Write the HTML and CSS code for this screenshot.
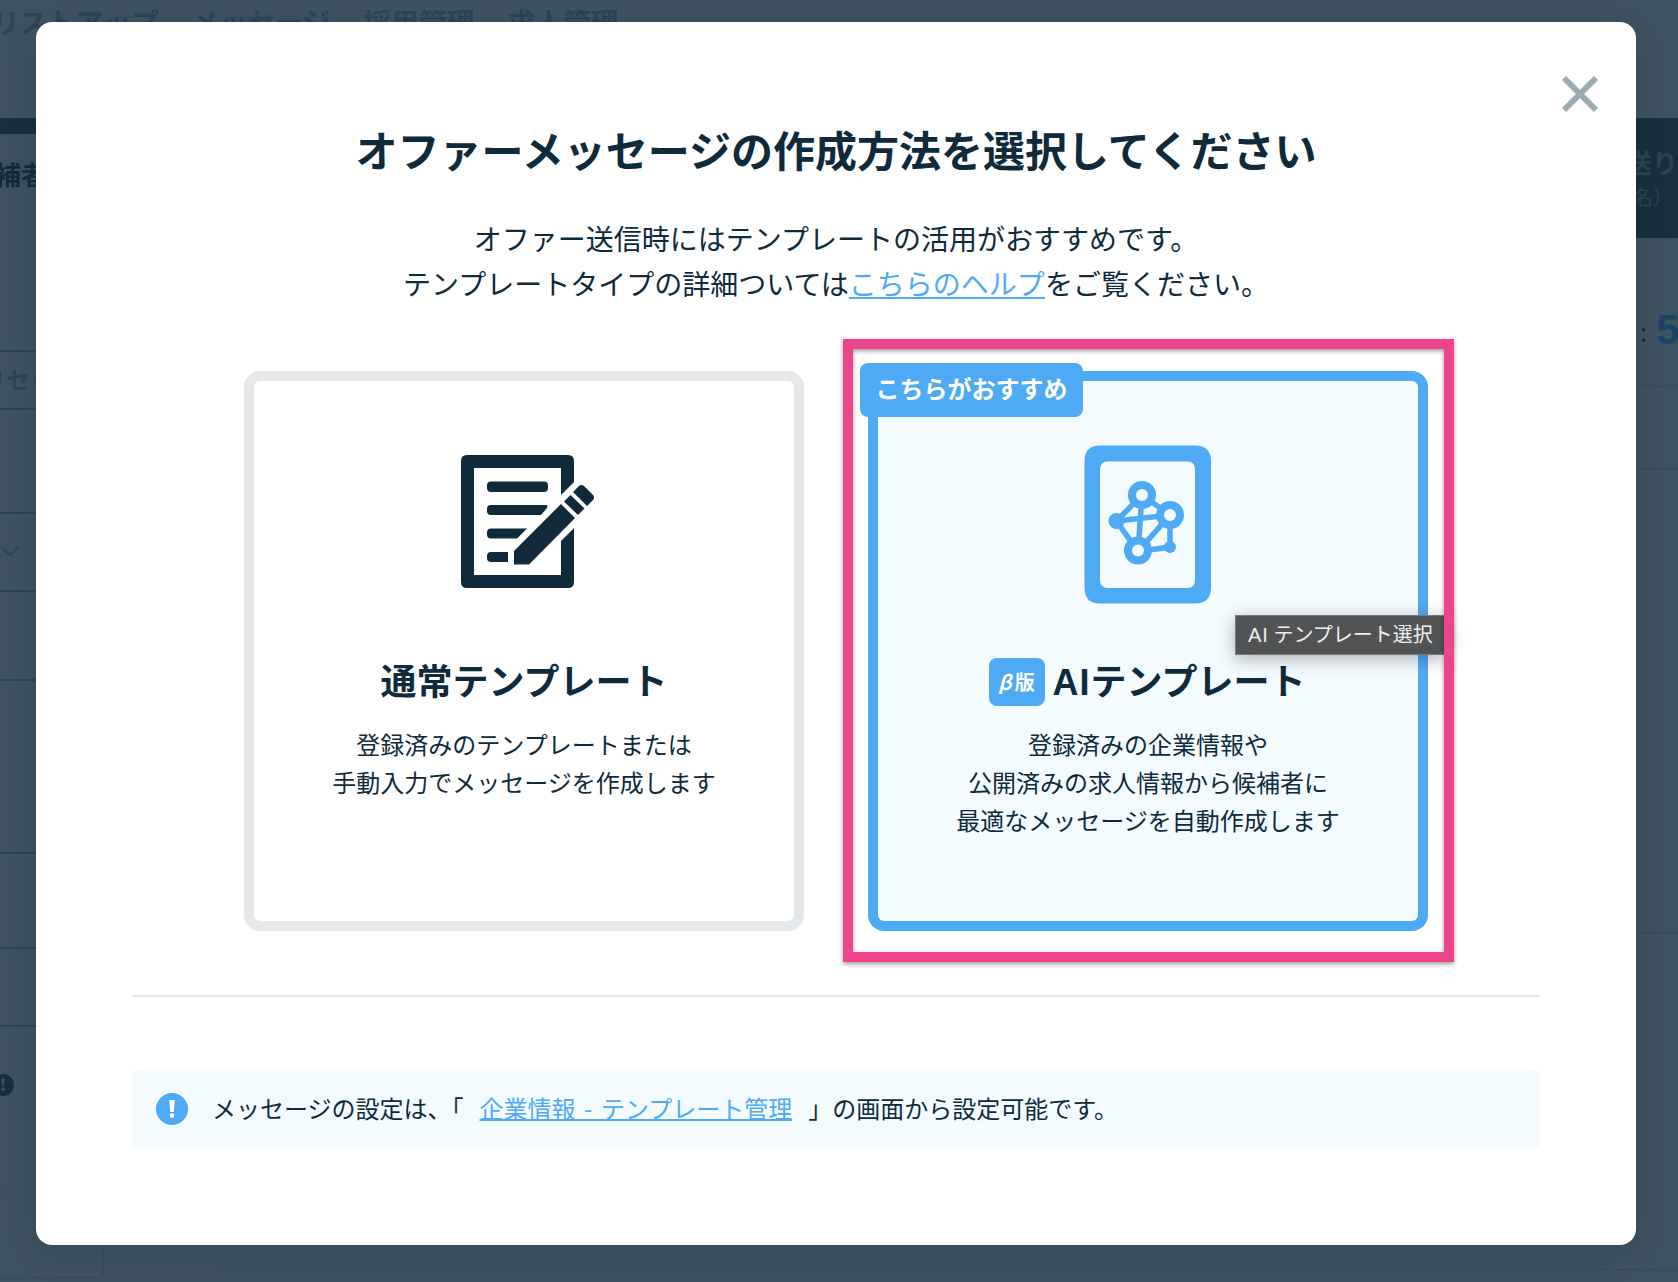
FILE: index.html
```html
<!DOCTYPE html>
<html lang="ja">
<head>
<meta charset="utf-8">
<title>オファーメッセージの作成方法</title>
<link rel="stylesheet" href="styles.css">
</head>
<body>
<div class="page">
  <nav class="nav"><span>リストアップ</span><span>メッセージ</span><span>採用管理</span><span>求人管理</span></nav>
  <div class="columns">
    <aside class="side">
      <div class="side-head">補者</div>
      <div class="row reset">リセット</div>
      <div class="row r1"></div>
      <div class="row r2"><svg width="18" height="10" viewBox="0 0 18 10"><path d="M1 1l8 7 8-7" fill="none" stroke="#2c4454" stroke-width="2"/></svg></div>
      <div class="row r3"></div>
      <div class="row r4"></div>
      <div class="row r5"></div>
      <div class="row r6"></div>
      <div class="row r7"><span class="dot">!</span></div>
      <div class="row r8"></div>
    </aside>
    <div class="list"></div>
    <div class="results">
      <div class="send"><b>送り</b><small>名）</small></div>
      <div class="count"><span>:</span><b>5</b></div>
      <div class="line l1"></div>
      <div class="line l2"></div>
      <div class="line l3"></div>
      <div class="line"></div>
    </div>
  </div>
</div>

<div class="modal">
  <button class="close" aria-label="閉じる"><svg width="40" height="40" viewBox="0 0 40 40"><path d="M4 4l32 32M36 4L4 36" stroke="#9aabb1" stroke-width="6"/></svg></button>
  <h1 class="title">オファーメッセージの作成方法を選択してください</h1>
  <p class="lead">オファー送信時にはテンプレートの活用がおすすめです。<br>テンプレートタイプの詳細ついては<a href="#">こちらのヘルプ</a>をご覧ください。</p>
  <div class="cards">
    <section class="card">
      <div class="art">
        <svg width="144" height="136" viewBox="-8 0 144 136">
          <g fill="#0e2a3b">
            <path fill-rule="evenodd" d="M7 1H108Q114 1 114 7V28L101 41V14H14V121H101V87L114 74V128Q114 134 108 134H7Q1 134 1 128V7Q1 1 7 1Z"/>
            <rect x="27" y="27.500" width="61" height="10.500" rx="4"/>
            <path d="M31 51H86Q88 51 87 54L81 61H31Q27 61 27 57V55Q27 51 31 51Z"/>
            <path d="M31 74.500H67L57 84.500H31Q27 84.500 27 80.500V78.500Q27 74.500 31 74.500Z"/>
            <path d="M31 98H48V108H31Q27 108 27 104V102Q27 98 31 98Z"/>
            <path d="M54 97L101 50L115 64L69 110.500H54Z"/>
            <path d="M104 47.500L110.500 41L124.500 54.500L118 61Z"/>
            <path d="M113 38L119 32Q121.500 30 124 32L133 41Q135 43.500 133 46L127 52Z"/>
          </g>
        </svg>
      </div>
      <h2 class="name">通常テンプレート</h2>
      <p class="desc">登録済みのテンプレートまたは<br>手動入力でメッセージを作成します</p>
    </section>
    <section class="card recommended">
      <span class="ribbon">こちらがおすすめ</span>
      <div class="art">
        <svg width="129" height="159" viewBox="0 0 129 159">
          <path fill="#4faaf5" fill-rule="evenodd" d="M16 .5H111Q127 .5 127 16.500V142.500Q127 158.500 111 158.500H16Q.5 158.500 .5 142.500V16.500Q.5 .5 16 .5ZM24 16.500Q16 16.500 16 24.500V135Q16 143 24 143H103Q111 143 111 135V24.500Q111 16.500 103 16.500Z"/>
          <g transform="translate(.5 .5)">
            <path d="M57.500 49.500L32 75.500L53.500 106L57.500 49.500L85.500 69.500V101.500L53.500 106L85.500 69.500L32 75.500" fill="none" stroke="#4faaf5" stroke-width="5.500"/>
            <g fill="#4faaf5"><circle cx="32" cy="75.500" r="8"/><circle cx="85.500" cy="101.500" r="6"/></g>
            <g fill="#f3fbff" stroke="#4faaf5" stroke-width="8"><circle cx="57.500" cy="49.500" r="10"/><circle cx="85.500" cy="69.500" r="10"/><circle cx="53.500" cy="105" r="10"/></g>
          </g>
        </svg>
      </div>
      <h2 class="name"><span class="beta"><i>β</i>版</span><span><span class="latin">AI</span>テンプレート</span></h2>
      <p class="desc">登録済みの企業情報や<br>公開済みの求人情報から候補者に<br>最適なメッセージを自動作成します</p>
    </section>
  </div>
  <div class="note">
    <svg width="32" height="32" viewBox="0 0 32 32"><circle cx="16" cy="16" r="16" fill="#4faaf5"/><path d="M13.200 7h5.600l-1 12h-3.600z" fill="#fff"/><circle cx="16" cy="22.600" r="2.300" fill="#fff"/></svg>
    <p>メッセージの設定は、「<a href="#">企業情報 - テンプレート管理</a>」の画面から設定可能です。</p>
  </div>
</div>
<div class="tooltip"><span class="latin">AI</span> テンプレート選択</div>
<div class="highlight"></div>
</body>
</html>
```
FILE: styles.css
```css
* { box-sizing: border-box; }
body {
  margin: 0;
  width: 1678px;
  height: 1282px;
  overflow: hidden;
  position: relative;
  background: #3e5360;
  color: #0e2a3b;
  font-family: "Noto Sans CJK JP", sans-serif;
}
h1, h2, p { margin: 0; }
a { color: #4faaf5; text-decoration: underline; text-decoration-thickness: 2px; text-decoration-skip-ink: none; }
.latin { font-family: "Liberation Sans", sans-serif; letter-spacing: 1px; }

/* Dimmed page under the dialog */
.page { height: 1282px; overflow: hidden; }
.nav {
  display: flex;
  gap: 33px;
  height: 118px;
  margin-left: -8px;
  font-size: 27.8px;
  font-weight: 700;
  line-height: 42px;
  color: #2c4454;
}
.columns { display: flex; }
.side { flex: none; width: 104px; height: 1161px; overflow: hidden; border-right: 2px solid #384e5c; border-bottom: 2px solid #384e5c; border-radius: 0 0 4px 0; }
.side-head {
  height: 232px;
  border-top: 16px solid #17303f;
  text-indent: -5px;
  font-size: 26px;
  font-weight: 700;
  line-height: 79px;
  color: #122c3c;
  white-space: nowrap;
}
.row { border-top: 2px solid #2c4454; display: flex; align-items: center; }
.reset { height: 58px; padding-bottom: 3px; text-indent: -18px; font-size: 24px; font-weight: 700; color: #2c4454; white-space: nowrap; }
.r1 { height: 104px; }
.r2 { height: 78px; }
.r2 svg { margin-left: 1px; }
.r3 { height: 89px; }
.r4 { height: 173px; }
.r5 { height: 95px; }
.r6 { height: 78px; }
.r7 { height: 166px; padding-bottom: 48px; }
.r8 { height: 80px; border-color: #384e5c; }
.dot { width: 22px; height: 22px; margin-left: -8px; border-radius: 50%; background: #17303f; color: #3e5360; font-size: 16px; font-weight: 900; line-height: 21px; text-align: center; }
.list { flex: 1; height: 1153px; margin-left: 108px; border-bottom: 2px solid #384e5c; }
.results { flex: none; width: 62px; height: 1164px; overflow: hidden; }
.send { display: flex; flex-direction: column; height: 120px; padding: 23px 0 0 10px; background: #17303f; color: #2c4454; white-space: nowrap; }
.send b { font-size: 26px; line-height: 42px; }
.send small { font-size: 20px; line-height: 28px; margin-left: 7px; }
.count { display: flex; align-items: center; gap: 9px; height: 147px; padding: 37px 0 0 24px; font-size: 26px; }
.count b { color: #1b4464; font: 700 42px "Liberation Sans", sans-serif; }
.line { border-top: 2px solid #384e5c; }
.l1 { height: 83px; }
.l2 { height: 464px; }
.l3 { height: 337px; }

/* Dialog */
.modal {
  position: absolute;
  left: 36px;
  top: 22px;
  width: 1600px;
  height: 1223px;
  padding: 93px 96px 96px;
  border-radius: 16px;
  background: #fff;
  box-shadow: 0 8px 32px rgba(14, 42, 59, .2);
}
.close { position: absolute; right: 36px; top: 52px; width: 40px; height: 40px; padding: 0; border: 0; background: none; }
.close svg { display: block; }
.title { font-size: 42px; font-weight: 700; line-height: 68px; text-align: center; }
.lead { margin-top: 33px; font-size: 28px; line-height: 44.8px; text-align: center; }
.lead a { text-underline-offset: 2px; }
.cards { display: flex; justify-content: center; gap: 64px; box-sizing: content-box; height: 560px; margin-top: 65px; padding-bottom: 64px; border-bottom: 2px solid #e4e8eb; }
.card { position: relative; width: 560px; height: 560px; border: 10px solid #e4e8eb; border-radius: 16px; text-align: center; }
.recommended { border-color: #4faaf5; background: #f3fbff; }
.art { display: flex; justify-content: center; align-items: flex-start; height: 202px; padding-top: 73px; margin-bottom: 68px; }
.art svg { flex: none; }
.recommended .art { padding-top: 64.5px; }
.name { display: flex; align-items: center; justify-content: center; gap: 8px; height: 56px; font-size: 36px; font-weight: 700; }
.beta { display: flex; align-items: center; justify-content: center; gap: 3px; width: 56px; height: 48px; margin: 6px 0 0 -2px; border-radius: 8px; background: #4faaf5; color: #fff; font-size: 20px; }
.desc { margin-top: 18px; font-size: 24px; line-height: 38.4px; }
.ribbon { position: absolute; left: -18px; top: -18px; width: 223px; height: 54px; border-radius: 8px; background: #4faaf5; color: #fff; font-size: 24px; font-weight: 700; line-height: 50px; }
.note { display: flex; align-items: center; gap: 24px; height: 80px; margin-top: 72px; padding: 0 24px; border-radius: 8px; background: #f3fbff; font-size: 24px; }
.note p { padding-bottom: 2px; }
.note a { margin: 0 16px; word-spacing: 3.2px; }

/* Hover tooltip and annotation frame */
.tooltip {
  position: absolute;
  left: 1235px;
  top: 615px;
  width: 212px;
  height: 40px;
  padding-left: 12px;
  border: 1px solid #777b7c;
  background: #515354;
  box-shadow: 0 4px 18px rgba(0, 0, 0, .3);
  color: #efefef;
  font-size: 20px;
  line-height: 36px;
  white-space: nowrap;
}
.highlight { position: absolute; left: 843px; top: 339px; width: 611px; height: 623px; border: 10px solid #ec458d; filter: drop-shadow(0 2px 2px rgba(0, 0, 0, .4)); }
```
